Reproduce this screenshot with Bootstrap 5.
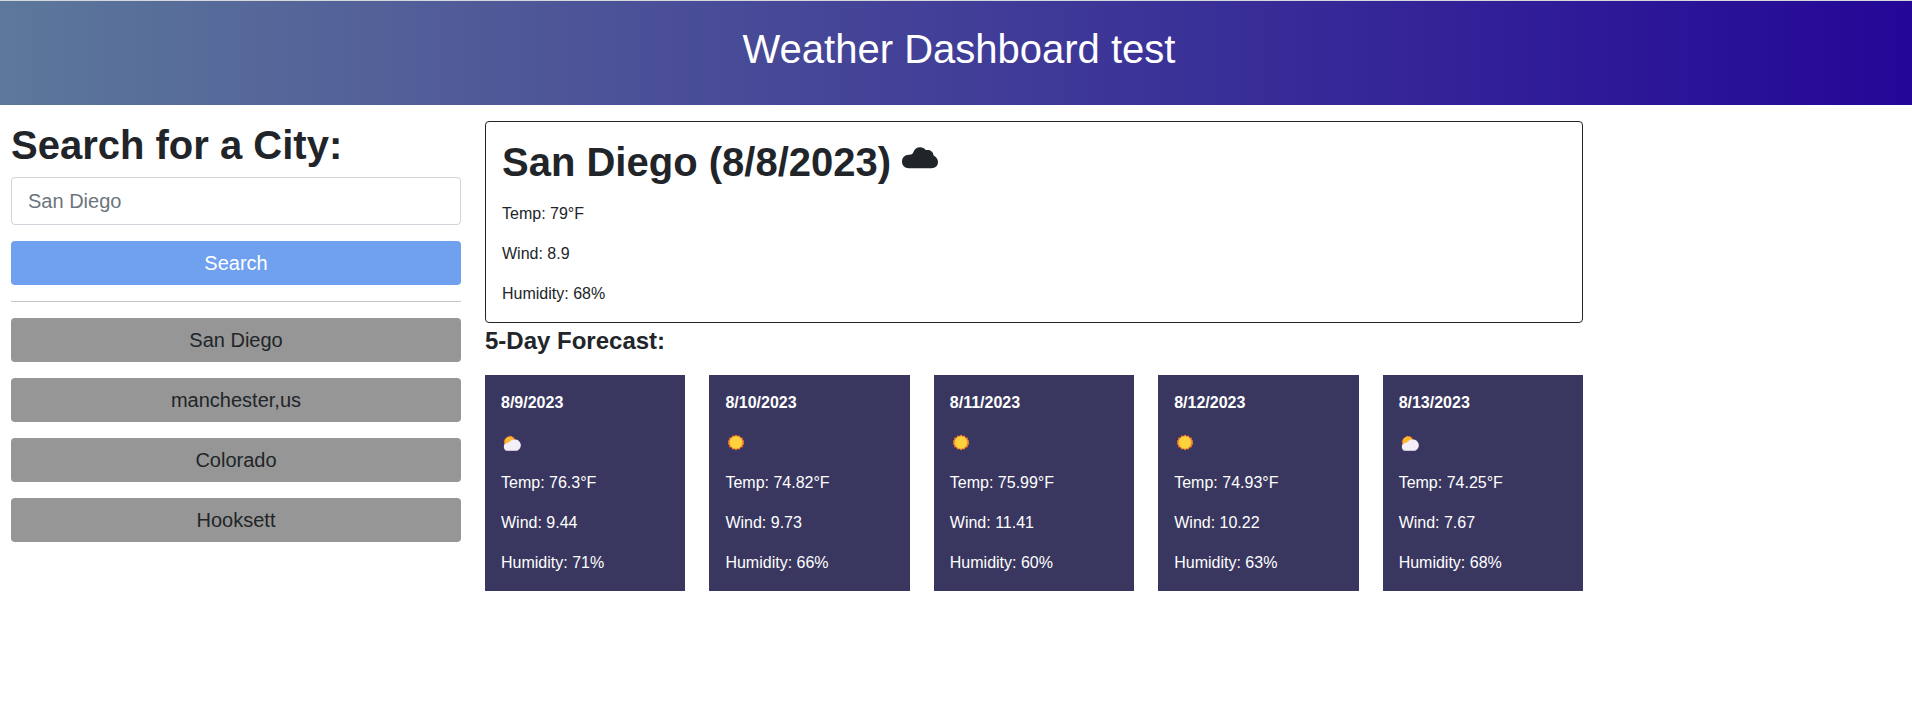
<!DOCTYPE html>
<html lang="en">
<head>
<meta charset="utf-8">
<meta name="viewport" content="width=device-width, initial-scale=1">
<title>Weather Dashboard</title>
<link href="https://cdn.jsdelivr.net/npm/bootstrap@5.3.0/dist/css/bootstrap.min.css" rel="stylesheet">
<style>
  body { font-family: "Liberation Sans", Arial, sans-serif; color: #212529; overflow: hidden; }
  .hero { border-top: 1px solid #d5d9dc; padding: 24px 0 24px 6px; background: linear-gradient(to right, #5c789b, #505a98 25%, #240797); }
  h1, .hero h1 { font-size: 40px; line-height: 48px; }
  .layout { padding: 16px 0 0 11px; }
  .search-panel { width: 450px; }
  .forecast-panel { width: 1098px; }
  .form-control { height: 48px; font-size: 20px; padding: 8px 16px; border-radius: 4px; border-color: #ced4da; }
  .form-control::placeholder { color: #6c757d; }
  .btn { height: 44px; font-size: 20px; line-height: 30px; border: 0; border-radius: 4px; }
  .btn-search { background: #6fa1ef; color: #fff; }
  .btn-history { background: #969696; color: #212529; }
  hr { color: #212529; opacity: .25; }
  .today { border: 1px solid #212529; border-radius: 4px; padding: 16px 16px 0; height: 202px; }
  .cloud { width: 36px; height: 22px; margin-left: 11px; margin-top: 9px; }
  .forecast-title { font-size: 24px; line-height: 29px; margin: 3px 0 20px; }
  .day { background: #39375f; height: 216px; padding: 16px 16px 0; }
  .icon-line { height: 24px; }
  .icon-line svg { display: block; width: 24px; height: 24px; }
</style>
</head>
<body>
<svg class="d-none" aria-hidden="true">
  <symbol id="sun" viewBox="0 0 24 24">
    <path fill="#f9802c" d="M11 3.400l1.500 1.700 2.200-.7.800 2.100 2.300.200-.1 2.300 1.500.8-.6 1.700.6 1.700-1.500.8.1 2.300-2.300.2-.8 2.100-2.200-.7-1.500 1.700-1.500-1.700-2.200.7-.8-2.100-2.300-.2.100-2.300-1.500-.8.600-1.700-.6-1.700 1.500-.8-.1-2.300 2.300-.2.800-2.100 2.200.7z"/>
    <circle cx="11" cy="11.500" r="6.200" fill="#fdd23c"/>
  </symbol>
  <symbol id="partly" viewBox="0 0 24 24">
    <path fill="#f9812d" d="M8.200 4.600l1.300.8 1.300-.6.8 1.300 1.500.2.200 1.500 1.100 1-.7 1.400-3 3-7 .8-.8-1.400.4-1.200-.6-1.200 1-1.100.1-1.600 1.500-.3.800-1.400 1.200.3z"/>
    <circle cx="8.600" cy="10.200" r="4.500" fill="#fdbb2f"/>
    <path fill="#f3eef8" d="M6.500 19.800a4 4 0 0 1-.5-7.900c1-.1 2-.5 3-1.500 1.400-1.300 2.800-1.800 4.500-1.800a5.600 5.600 0 0 1 1.400 11.200z"/>
    <path fill="#cdc3dc" d="M3.600 18.400q1.200 1.500 3.100 1.500h7.800q1.900 0 3-1.500-1.300.8-3 .8H6.700q-1.800 0-3.100-.8z"/>
  </symbol>
</svg>
<header class="hero text-white text-center">
  <h1 class="fw-normal mb-2">Weather Dashboard test</h1>
</header>
<div class="layout d-flex gap-4">
  <aside class="search-panel flex-shrink-0">
    <h1 class="fw-bold mb-2">Search for a City:</h1>
    <input type="text" class="form-control mb-3" placeholder="San Diego" aria-label="City">
    <button class="btn btn-search w-100 d-block">Search</button>
    <hr class="my-3">
    <div class="d-flex flex-column gap-3">
      <button class="btn btn-history">San Diego</button>
      <button class="btn btn-history">manchester,us</button>
      <button class="btn btn-history">Colorado</button>
      <button class="btn btn-history">Hooksett</button>
    </div>
  </aside>
  <main class="forecast-panel flex-shrink-0">
    <section class="today">
      <div class="d-flex align-items-start mb-3">
        <h1 class="fw-bold mb-0">San Diego (8/8/2023)</h1>
        <svg class="cloud" viewBox="0 0 36 22" aria-hidden="true"><path fill="#212529" d="M7 21.200C2.800 21.200 0 18.500 0 14.500 0 10.500 3 7.500 7 7.700 8.800 7.800 10.500 7.500 11.200 5.500 12.400 1.800 15 .2 18 .2 20.400.2 22.400 1.200 23.700 3 28 2.400 31.300 4.300 31.600 8.500 34.300 9.700 36 12.200 36 15 36 18.800 33.200 21.200 29.500 21.200z"/></svg>
      </div>
      <p>Temp: 79°F</p>
      <p>Wind: 8.9</p>
      <p>Humidity: 68%</p>
    </section>
    <h2 class="forecast-title fw-bold">5-Day Forecast:</h2>
    <div class="d-flex gap-4 text-white">
      <section class="day flex-fill w-100"><p class="fw-bold">8/9/2023</p><div class="icon-line mb-3"><svg><use href="#partly"/></svg></div><p>Temp: 76.3°F</p><p>Wind: 9.44</p><p>Humidity: 71%</p></section>
      <section class="day flex-fill w-100"><p class="fw-bold">8/10/2023</p><div class="icon-line mb-3"><svg><use href="#sun"/></svg></div><p>Temp: 74.82°F</p><p>Wind: 9.73</p><p>Humidity: 66%</p></section>
      <section class="day flex-fill w-100"><p class="fw-bold">8/11/2023</p><div class="icon-line mb-3"><svg><use href="#sun"/></svg></div><p>Temp: 75.99°F</p><p>Wind: 11.41</p><p>Humidity: 60%</p></section>
      <section class="day flex-fill w-100"><p class="fw-bold">8/12/2023</p><div class="icon-line mb-3"><svg><use href="#sun"/></svg></div><p>Temp: 74.93°F</p><p>Wind: 10.22</p><p>Humidity: 63%</p></section>
      <section class="day flex-fill w-100"><p class="fw-bold">8/13/2023</p><div class="icon-line mb-3"><svg><use href="#partly"/></svg></div><p>Temp: 74.25°F</p><p>Wind: 7.67</p><p>Humidity: 68%</p></section>
    </div>
  </main>
</div>
<script src="https://cdn.jsdelivr.net/npm/bootstrap@5.3.0/dist/js/bootstrap.bundle.min.js"></script>
</body>
</html>
